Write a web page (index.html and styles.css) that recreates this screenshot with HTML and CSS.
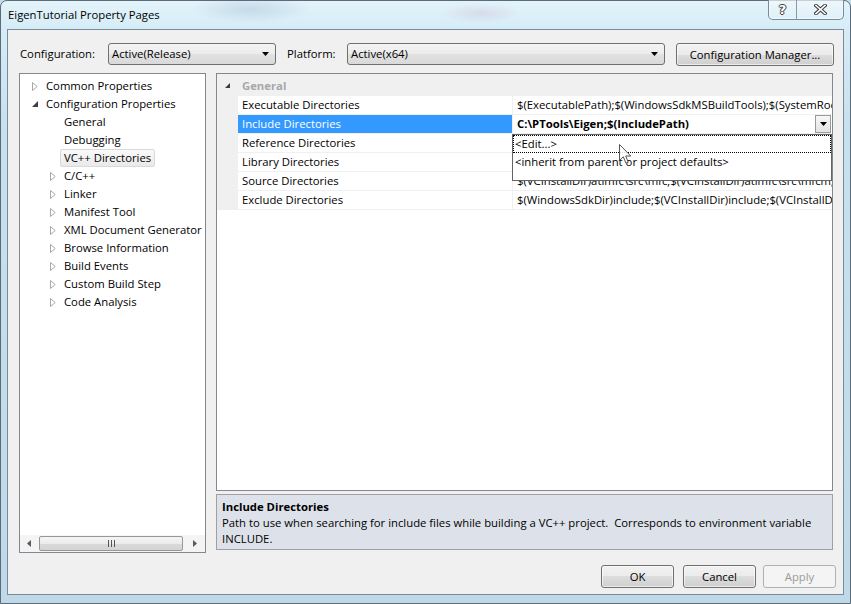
FILE: index.html
```html
<!DOCTYPE html>
<html>
<head>
<meta charset="utf-8">
<title>EigenTutorial Property Pages</title>
<link rel="stylesheet" href="styles.css">
</head>
<body>
<div class="window">
  <div class="titlebar">
    <span class="title">EigenTutorial Property Pages</span>
    <div class="caption">
      <span class="cap help">?</span>
      <span class="cap close">
        <svg width="13" height="11" viewBox="0 0 13 11"><path d="M2 1.5 L11 9.5 M11 1.5 L2 9.5" stroke="#3b3b3b" stroke-width="3.6" stroke-linecap="square"/><path d="M2 1.5 L11 9.5 M11 1.5 L2 9.5" stroke="#ffffff" stroke-width="1.6" stroke-linecap="square"/></svg>
      </span>
    </div>
  </div>

  <div class="client">
    <div class="toolbar">
      <span class="tlabel cfg-label">Configuration:</span>
      <div class="combo cfg-combo"><span class="ctext">Active(Release)</span><svg class="carrow" width="7" height="4" viewBox="0 0 7 4"><path d="M0 0 H7 L3.5 4 Z" fill="#000"/></svg></div>
      <span class="tlabel plat-label">Platform:</span>
      <div class="combo plat-combo"><span class="ctext">Active(x64)</span><svg class="carrow" width="7" height="4" viewBox="0 0 7 4"><path d="M0 0 H7 L3.5 4 Z" fill="#000"/></svg></div>
      <button class="btn cfgmgr">Configuration Manager...</button>
    </div>

    <div class="main">
      <div class="tree">
        <div class="tree-list">
          <div class="node l0"><span class="exp"><svg width="6" height="9" viewBox="0 0 6 9"><path d="M0.5 0.5 L5.2 4.5 L0.5 8.5 Z" fill="#fff" stroke="#a8a8a8"/></svg></span><span class="lbl">Common Properties</span></div>
          <div class="node l0"><span class="exp"><svg width="6" height="6" viewBox="0 0 6 6"><path d="M6 0 L6 6 L0 6 Z" fill="#404040"/></svg></span><span class="lbl">Configuration Properties</span></div>
          <div class="node l1"><span class="exp"></span><span class="lbl">General</span></div>
          <div class="node l1"><span class="exp"></span><span class="lbl">Debugging</span></div>
          <div class="node l1"><span class="exp"></span><span class="lbl sel">VC++ Directories</span></div>
          <div class="node l1"><span class="exp"><svg width="6" height="9" viewBox="0 0 6 9"><path d="M0.5 0.5 L5.2 4.5 L0.5 8.5 Z" fill="#fff" stroke="#a8a8a8"/></svg></span><span class="lbl">C/C++</span></div>
          <div class="node l1"><span class="exp"><svg width="6" height="9" viewBox="0 0 6 9"><path d="M0.5 0.5 L5.2 4.5 L0.5 8.5 Z" fill="#fff" stroke="#a8a8a8"/></svg></span><span class="lbl">Linker</span></div>
          <div class="node l1"><span class="exp"><svg width="6" height="9" viewBox="0 0 6 9"><path d="M0.5 0.5 L5.2 4.5 L0.5 8.5 Z" fill="#fff" stroke="#a8a8a8"/></svg></span><span class="lbl">Manifest Tool</span></div>
          <div class="node l1"><span class="exp"><svg width="6" height="9" viewBox="0 0 6 9"><path d="M0.5 0.5 L5.2 4.5 L0.5 8.5 Z" fill="#fff" stroke="#a8a8a8"/></svg></span><span class="lbl">XML Document Generator</span></div>
          <div class="node l1"><span class="exp"><svg width="6" height="9" viewBox="0 0 6 9"><path d="M0.5 0.5 L5.2 4.5 L0.5 8.5 Z" fill="#fff" stroke="#a8a8a8"/></svg></span><span class="lbl">Browse Information</span></div>
          <div class="node l1"><span class="exp"><svg width="6" height="9" viewBox="0 0 6 9"><path d="M0.5 0.5 L5.2 4.5 L0.5 8.5 Z" fill="#fff" stroke="#a8a8a8"/></svg></span><span class="lbl">Build Events</span></div>
          <div class="node l1"><span class="exp"><svg width="6" height="9" viewBox="0 0 6 9"><path d="M0.5 0.5 L5.2 4.5 L0.5 8.5 Z" fill="#fff" stroke="#a8a8a8"/></svg></span><span class="lbl">Custom Build Step</span></div>
          <div class="node l1"><span class="exp"><svg width="6" height="9" viewBox="0 0 6 9"><path d="M0.5 0.5 L5.2 4.5 L0.5 8.5 Z" fill="#fff" stroke="#a8a8a8"/></svg></span><span class="lbl">Code Analysis</span></div>
        </div>
        <div class="hscroll">
          <span class="sarrow"><svg width="4" height="7" viewBox="0 0 4 7"><path d="M4 0 V7 L0 3.5 Z" fill="#5a5a5a"/></svg></span>
          <span class="thumb"><svg width="7" height="7" viewBox="0 0 7 7"><path d="M0.5 0 V7 M3.5 0 V7 M6.5 0 V7" stroke="#555" stroke-width="1"/></svg></span>
          <span class="sarrow"><svg width="4" height="7" viewBox="0 0 4 7"><path d="M0 0 V7 L4 3.5 Z" fill="#5a5a5a"/></svg></span>
        </div>
      </div>

      <div class="right">
        <div class="grid">
          <div class="cat"><span class="gexp"><svg width="5" height="5" viewBox="0 0 5 5"><path d="M5 0 L5 5 L0 5 Z" fill="#3c3c3c"/></svg></span><span class="catname">General</span></div>
          <div class="row"><span class="g"></span><span class="k">Executable Directories</span><span class="v">$(ExecutablePath);$(WindowsSdkMSBuildTools);$(SystemRoot)\SysWow64;$(FxCopDir);$(PATH);</span></div>
          <div class="row sel"><span class="g"></span><span class="k">Include Directories</span><span class="v"><span class="vtext">C:\PTools\Eigen;$(IncludePath)</span><span class="ddbtn"><svg width="7" height="4" viewBox="0 0 7 4"><path d="M0 0 H7 L3.5 4 Z" fill="#000"/></svg></span></span></div>
          <div class="row"><span class="g"></span><span class="k">Reference Directories</span><span class="v">$(VCInstallDir)atlmfc\lib;$(VCInstallDir)lib</span></div>
          <div class="row"><span class="g"></span><span class="k">Library Directories</span><span class="v">$(VCInstallDir)lib;$(VCInstallDir)atlmfc\lib;$(WindowsSdkDir)lib;$(FrameworkSDKDir)\lib</span></div>
          <div class="row"><span class="g"></span><span class="k">Source Directories</span><span class="v">$(VCInstallDir)atlmfc\src\mfc;$(VCInstallDir)atlmfc\src\mfcm;$(VCInstallDir)atlmfc\src\atl;$(VCInstallDir)crt\src;</span></div>
          <div class="row"><span class="g"></span><span class="k">Exclude Directories</span><span class="v">$(WindowsSdkDir)include;$(VCInstallDir)include;$(VCInstallDir)atlmfc\include;$(MSBuildToolsPath32);$(VCInstallDir)lib;</span></div>

          <div class="dropdown">
            <div class="ditem focus">&lt;Edit...&gt;</div>
            <div class="ditem">&lt;inherit from parent or project defaults&gt;</div>
          </div>
        </div>
        <div class="desc">
          <div class="dtitle">Include Directories</div>
          <div class="dtext">Path to use when searching for include files while building a VC++ project.&nbsp; Corresponds to environment variable<br>INCLUDE.</div>
        </div>
      </div>
    </div>

    <div class="buttons">
      <button class="btn okbtn">OK</button>
      <button class="btn cancelbtn">Cancel</button>
      <button class="btn applybtn" disabled>Apply</button>
    </div>
  </div>

  <svg class="cursor" width="13" height="21" viewBox="0 0 13 21"><path d="M0.5 0.5 L0.5 16.5 L4.3 12.8 L7 19.3 L9.3 18.3 L6.7 12 L11.8 12 Z" fill="#ffffff" fill-opacity="0.85" stroke="#555" stroke-width="1" stroke-linejoin="round"/></svg>
</div>
</body>
</html>
```

FILE: styles.css
```css
* { box-sizing: border-box; }

html, body {
  margin: 0;
  padding: 0;
}

body {
  width: 851px;
  height: 604px;
  overflow: hidden;
  font-family: "Open Sans", "Noto Sans", "DejaVu Sans", sans-serif;
  font-size: 11.3px;
  color: #000;
  background: #c4dcea;
}

.window {
  position: relative;
  width: 851px;
  height: 604px;
  border: 1px solid #5c6b79;
  border-radius: 7px 7px 0 0;
  background:
    radial-gradient(ellipse 60px 14px at 250px 8px, rgba(150,175,200,0.35), rgba(150,175,200,0)),
    radial-gradient(ellipse 40px 10px at 480px 12px, rgba(200,170,200,0.3), rgba(200,170,200,0)),
    linear-gradient(180deg, #e3f3fa 0, #d6edf7 26px, #c8e1ee 120px, #bfd9e8 100%);
  display: flex;
  flex-direction: column;
}

/* ---------- title bar ---------- */
.titlebar {
  height: 28px;
  display: flex;
  align-items: flex-start;
  padding-left: 7px;
}

.title {
  margin-top: 6px;
  line-height: 16px;
  color: #000;
}

.caption {
  margin-left: auto;
  margin-right: 6px;
  margin-top: -1px;
  height: 20px;
  display: flex;
  border: 1px solid #7b8896;
  border-top: none;
  border-radius: 0 0 5px 5px;
  background: linear-gradient(180deg, rgba(255,255,255,0.35), rgba(255,255,255,0.1));
  box-shadow: inset 0 0 0 1px rgba(255,255,255,0.5);
}

.cap {
  display: flex;
  align-items: center;
  justify-content: center;
  height: 19px;
}

.help {
  width: 28px;
  border-right: 1px solid #8a97a4;
  color: #fff;
  font-weight: 700;
  font-size: 13px;
  font-family: "DejaVu Sans", sans-serif;
  text-shadow: 1px 0 #3b3b3b, -1px 0 #3b3b3b, 0 1px #3b3b3b, 0 -1px #3b3b3b;
}

.close {
  width: 46px;
}

/* ---------- client area ---------- */
.client {
  margin: 0 6px;
  height: 566px;
  border: 1px solid #7b8a99;
  background: #f0f0f0;
  display: flex;
  flex-direction: column;
}

.toolbar {
  display: flex;
  align-items: flex-start;
  padding: 13px 0 0 12px;
  height: 36px;
}

.tlabel {
  line-height: 22px;
  white-space: nowrap;
}

.cfg-label { width: 88px; }
.plat-label { width: 60px; margin-left: 11px; }

.combo {
  height: 22px;
  border: 1px solid #707070;
  border-radius: 3px;
  background: linear-gradient(180deg, #f4f4f4 0, #ececec 50%, #e2e2e2 50%, #d9d9d9 100%);
  display: flex;
  align-items: center;
  padding-left: 3px;
}

.ctext {
  flex: 1;
  line-height: 20px;
}

.carrow { margin-right: 6px; }

.cfg-combo { width: 168px; }
.plat-combo { width: 318px; }

.btn {
  height: 23px;
  border: 1px solid #707070;
  border-radius: 3px;
  background: linear-gradient(180deg, #f2f2f2 0, #ebebeb 50%, #dddddd 50%, #cfcfcf 100%);
  font-family: inherit;
  font-size: inherit;
  color: #000;
  padding: 0;
  box-shadow: inset 0 0 0 1px rgba(255,255,255,0.6);
}

.cfgmgr {
  width: 158px;
  margin-left: 11px;
}

/* ---------- main ---------- */
.main {
  display: flex;
  margin-top: 7px;
  padding-left: 11px;
  height: 480px;
}

.tree {
  width: 187px;
  border: 1px solid #828790;
  background: #fff;
  display: flex;
  flex-direction: column;
}

.tree-list {
  flex: 1;
  padding-top: 3px;
  overflow: hidden;
}

.node {
  display: flex;
  align-items: center;
  height: 18px;
  white-space: nowrap;
}

.l0 { padding-left: 10px; }
.l1 { padding-left: 28px; }

.exp {
  width: 16px;
  height: 18px;
  display: flex;
  align-items: center;
  padding-left: 2px;
  flex: none;
}

.lbl {
  line-height: 18px;
}

.lbl.sel {
  height: 18px;
  line-height: 16px;
  margin-left: -4px;
  padding: 0 3px 0 3px;
  border: 1px solid #d9d9d9;
  border-radius: 2px;
  background: linear-gradient(180deg, #fafafa, #e9e9e9);
}

.hscroll {
  height: 17px;
  display: flex;
  align-items: center;
  background: #f4f4f4;
}

.sarrow {
  width: 17px;
  height: 17px;
  display: flex;
  align-items: center;
  justify-content: center;
}

.thumb {
  width: 144px;
  height: 15px;
  margin: 0 3px 0 2px;
  border: 1px solid #979797;
  border-radius: 2px;
  background: linear-gradient(180deg, #f5f5f5 0, #ebebeb 50%, #dadada 50%, #d4d4d4 100%);
  display: flex;
  align-items: center;
  justify-content: center;
}

/* ---------- property grid ---------- */
.right {
  margin-left: 10px;
  width: 617px;
  display: flex;
  flex-direction: column;
}

.grid {
  position: relative;
  height: 418px;
  border: 1px solid #828790;
  background: #fff;
}

.cat {
  height: 22px;
  display: flex;
  align-items: center;
  background: #f0f0f0;
  padding-top: 1px;
}

.gexp {
  width: 21px;
  padding-left: 8px;
  display: flex;
  align-items: center;
}

.catname {
  padding-left: 4px;
  color: #a6a8ab;
  font-weight: 700;
}

.row {
  display: grid;
  grid-template-columns: 21px 275px 1fr;
  height: 19px;
}

.row .g { background: #f0f0f0; }

.row .k {
  padding-left: 4px;
  line-height: 18px;
  border-bottom: 1px solid #f0f0f0;
  border-right: 1px solid #f0f0f0;
  white-space: nowrap;
}

.row .v {
  padding-left: 4px;
  line-height: 18px;
  border-bottom: 1px solid #f0f0f0;
  white-space: nowrap;
  overflow: hidden;
}

.row.sel .k {
  background: #3399ff;
  color: #fff;
}

.row.sel .v {
  display: flex;
  align-items: center;
  font-weight: 700;
}

.vtext { flex: 1; }

.ddbtn {
  width: 16px;
  height: 18px;
  margin-right: 1px;
  border: 1px solid #9a9a9a;
  background: linear-gradient(180deg, #f7f7f7, #e4e4e4);
  display: flex;
  align-items: center;
  justify-content: center;
}

.dropdown {
  position: absolute;
  left: 295px;
  top: 60px;
  width: 320px;
  height: 47px;
  background: #fff;
  border: 1px solid #646464;
}

.ditem {
  height: 18px;
  line-height: 18px;
  padding-left: 2px;
  white-space: nowrap;
}

.ditem.focus {
  border: 1px dotted #000;
  line-height: 16px;
  padding-left: 1px;
}

/* ---------- description ---------- */
.desc {
  margin-top: 3px;
  height: 56px;
  border: 1px solid #a0a0a0;
  background: #dde2ea;
  padding: 3px 5px 0 5px;
  line-height: 16px;
}

.dtitle { font-weight: 700; line-height: 17px; }

.dtext { white-space: nowrap; }

/* ---------- bottom buttons ---------- */
.buttons {
  display: flex;
  justify-content: flex-end;
  margin-top: 12px;
  padding-right: 7px;
}

.okbtn, .cancelbtn, .applybtn { width: 73px; }
.cancelbtn { margin-left: 9px; }
.applybtn {
  margin-left: 7px;
  border-color: #adb2b5;
  background: #f4f4f4;
  color: #9a9a9a;
  box-shadow: none;
}

.cursor {
  position: absolute;
  left: 618px;
  top: 143px;
}
```
